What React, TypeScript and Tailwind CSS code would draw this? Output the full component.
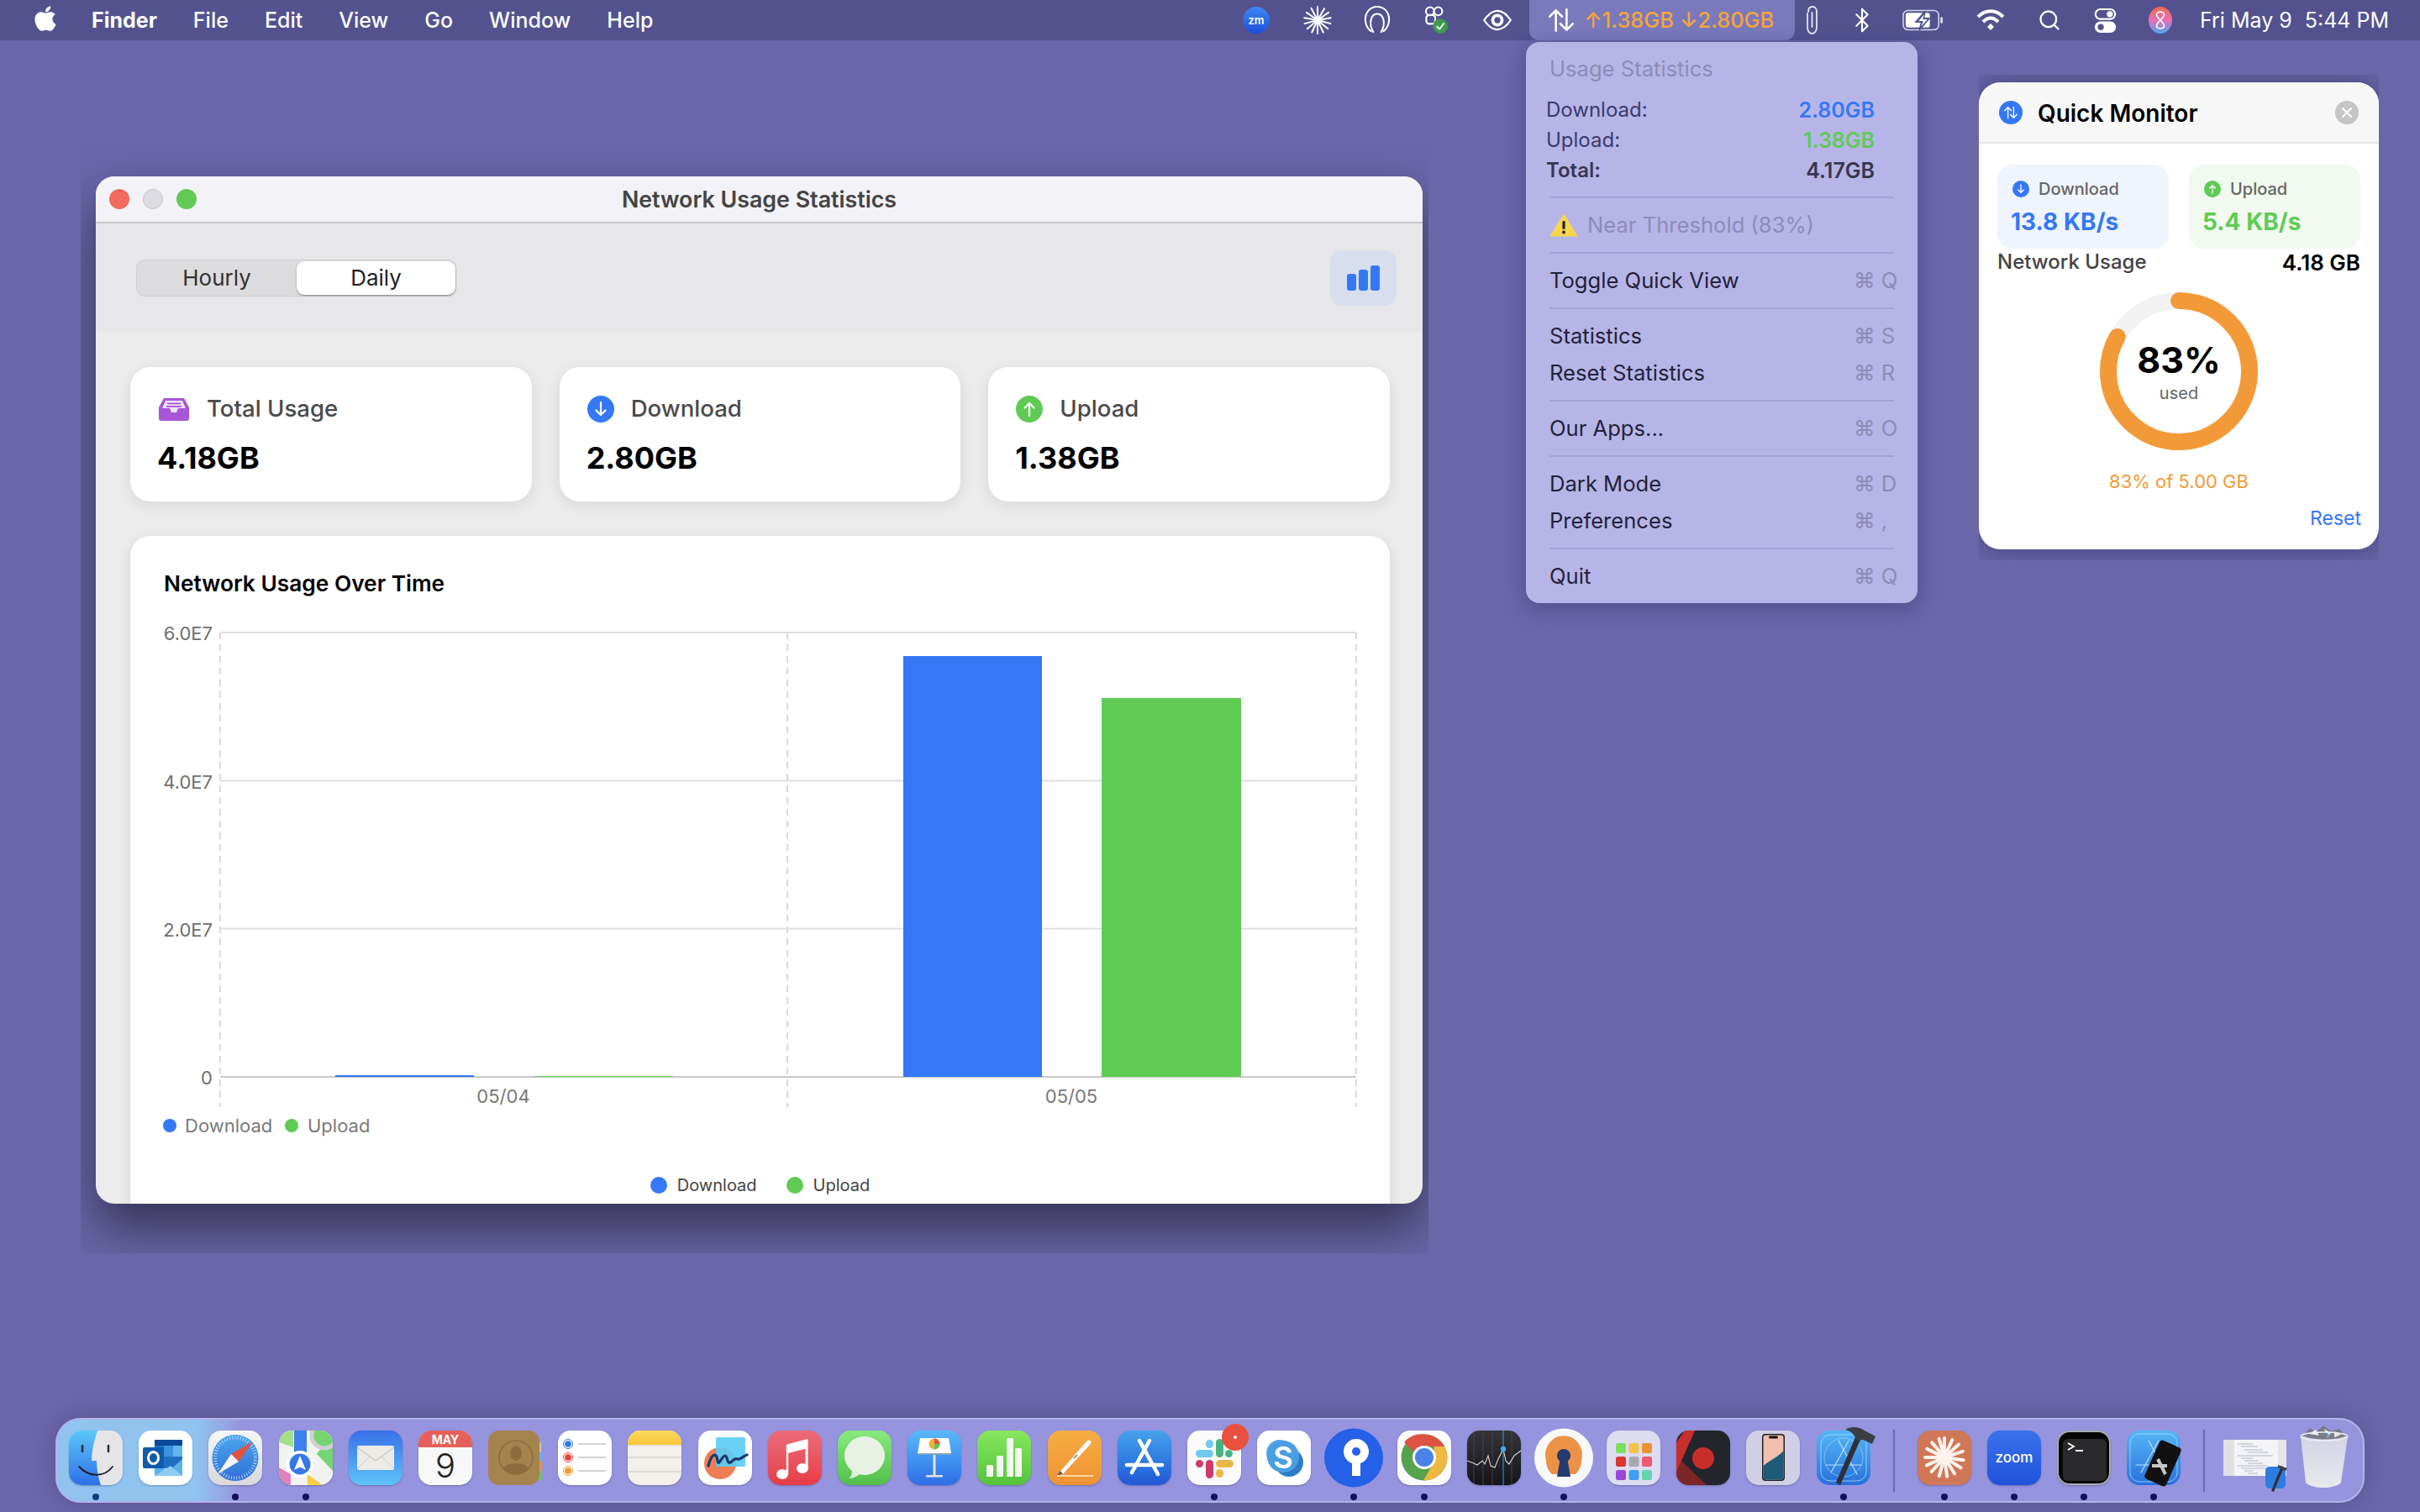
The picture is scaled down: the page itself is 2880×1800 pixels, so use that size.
import React from 'react';
import { FaApple } from 'react-icons/fa';
import { Bluetooth, Search } from 'lucide-react';

const Tile: React.FC<{ className: string; children?: React.ReactNode }> = ({ className, children }) => (
  <div className={`w-16 h-[65px] rounded-[15px] overflow-hidden shadow-[0_1px_2px_rgba(40,40,90,0.35)] ${className}`}>
    <svg viewBox="0 0 64 65" className="w-16 h-[65px] block">{children}</svg>
  </div>
);

const Free: React.FC<{ children?: React.ReactNode }> = ({ children }) => (
  <svg viewBox="0 0 64 65" className="w-16 h-[65px] block overflow-visible">{children}</svg>
);

const AppStoreA = ({ stroke = '#fff', w = 4.5 }: { stroke?: string; w?: number }) => (
  <g stroke={stroke} strokeWidth={w} strokeLinecap="round" fill="none">
    <path d="M38 12 L17 50" />
    <path d="M26 12 L48 52" />
    <path d="M11 41 H53" />
  </g>
);

const dockItems: { name: string; dot?: string; icon: React.ReactNode }[] = [
  {
    name: 'Finder', dot: '#0e3d7c',
    icon: (
      <Tile className="bg-[#e5e5e8]">
        <defs><linearGradient id="fnd" x1="0" y1="0" x2="0" y2="1"><stop offset="0" stopColor="#5ac8fa" /><stop offset="1" stopColor="#2f6fe6" /></linearGradient></defs>
        <path d="M0 0H34C30 12 27 24 27 36H33C33 46 35 56 38 65H0Z" fill="url(#fnd)" />
        <path d="M16 18V25M47 18V25" stroke="#2b2b33" strokeWidth="2.5" strokeLinecap="round" />
        <path d="M12 43C24 56 42 56 52 43" stroke="#1f2030" strokeWidth="2" fill="none" strokeLinecap="round" />
      </Tile>
    ),
  },
  {
    name: 'Outlook',
    icon: (
      <Tile className="bg-white">
        <rect x="19" y="11" width="33" height="34" fill="#1e6fc4" />
        <rect x="19" y="11" width="33" height="7" fill="#0d4a97" />
        <rect x="30" y="18" width="11" height="13" fill="#3a94df" />
        <rect x="41" y="18" width="11" height="13" fill="#64b5ee" />
        <path d="M19 40L36 48L52 34V54H19Z" fill="#5bb3ec" />
        <path d="M19 54L38 42L52 54Z" fill="#8ccdf4" />
        <rect x="5" y="20" width="25" height="25" rx="2" fill="#0f5aab" />
        <ellipse cx="17.5" cy="32.5" rx="6" ry="7" fill="none" stroke="#fff" strokeWidth="3" />
      </Tile>
    ),
  },
  {
    name: 'Safari', dot: '#14115e',
    icon: (
      <Tile className="bg-linear-to-b from-[#f7f7f7] to-[#d9d9dc]">
        <defs><linearGradient id="saf" x1="0" y1="0" x2="0" y2="1"><stop offset="0" stopColor="#4aa6ec" /><stop offset="1" stopColor="#2f6fd8" /></linearGradient></defs>
        <circle cx="32" cy="32.5" r="27.5" fill="url(#saf)" />
        <circle cx="32" cy="32.5" r="24" fill="none" stroke="#d8ecfb" strokeWidth="4" strokeDasharray="0.8 2.4" />
        <path d="M53 13L27 28L36 37Z" fill="#e8503f" />
        <path d="M11 52L27 28L36 37Z" fill="#f4f4f4" />
      </Tile>
    ),
  },
  {
    name: 'Maps', dot: '#14115e',
    icon: (
      <Tile className="bg-[#f2f2f0]">
        <path d="M0 0H17V20L0 14Z" fill="#a4e08a" />
        <path d="M42 0H64V60L30 22V0Z" fill="#f2f2f0" />
        <path d="M45 28L64 48V10C58 14 50 20 45 28Z" fill="#74d572" />
        <circle cx="54" cy="6" r="15" fill="#74d572" stroke="#d0d0d0" strokeWidth="5" />
        <path d="M0 44L14 52V65H0Z" fill="#dd82bf" />
        <path d="M34 52L52 65H34Z" fill="#f5cf45" />
        <rect x="18" y="0" width="15" height="30" fill="#3d80ea" />
        <circle cx="25" cy="40" r="16" fill="#fff" />
        <circle cx="25" cy="40" r="12.5" fill="#3577e6" />
        <path d="M25 30L32 47L25 43.5L18 47Z" fill="#fff" />
      </Tile>
    ),
  },
  {
    name: 'Mail',
    icon: (
      <Tile className="bg-linear-to-b from-[#3a70e8] to-[#5ec3f8]">
        <rect x="10" y="18" width="44" height="29" rx="2" fill="#ecebe8" />
        <path d="M10 20L32 36L54 20" fill="none" stroke="#bdbcbc" strokeWidth="1" />
        <path d="M10 46L25 31M54 46L39 31" stroke="#cfcecc" strokeWidth="1" />
      </Tile>
    ),
  },
  {
    name: 'Calendar',
    icon: (
      <Tile className="bg-[#f8f8f8]">
        <rect x="0" y="0" width="64" height="20" fill="#e5605a" />
        <text x="32" y="16" textAnchor="middle" fontSize="14" fontWeight="700" fill="#fff" fontFamily="Inter, sans-serif">MAY</text>
        <text x="32" y="56" textAnchor="middle" fontSize="40" fontWeight="300" fill="#222" fontFamily="Inter, sans-serif">9</text>
      </Tile>
    ),
  },
  {
    name: 'Contacts',
    icon: (
      <Free>
        <rect x="50" y="14" width="13" height="12" fill="#c9c3ac" />
        <rect x="50" y="26" width="13" height="12" fill="#5bb5ee" />
        <rect x="50" y="36" width="13" height="12" fill="#ee9330" />
        <rect x="50" y="48" width="13" height="11" fill="#66c760" />
        <rect x="0" y="0" width="61" height="65" rx="13" fill="#a5834f" />
        <circle cx="33" cy="32" r="20" fill="none" stroke="#8d6d3d" strokeWidth="1.6" />
        <ellipse cx="33" cy="27" rx="7" ry="9" fill="#8d6d3d" />
        <path d="M18 45C22 37 44 37 48 45C44 50 38 52 33 52C28 52 22 50 18 45Z" fill="#8d6d3d" />
      </Free>
    ),
  },
  {
    name: 'Reminders',
    icon: (
      <Tile className="bg-white">
        {[['#2f78f0', 16], ['#e8413a', 32], ['#ef9a2e', 48]].map(([c, y]) => (
          <g key={String(c)}>
            <circle cx="12" cy={Number(y)} r="5.5" fill="none" stroke={String(c)} strokeWidth="1" />
            <circle cx="12" cy={Number(y)} r="3.8" fill={String(c)} />
            <rect x="24" y={Number(y) - 0.8} width="33" height="1.6" fill="#c8c8cc" />
          </g>
        ))}
      </Tile>
    ),
  },
  {
    name: 'Notes',
    icon: (
      <Tile className="bg-[#f2f0e9]">
        <defs><linearGradient id="nts" x1="0" y1="0" x2="0" y2="1"><stop offset="0" stopColor="#fdd95e" /><stop offset="1" stopColor="#f9c63a" /></linearGradient></defs>
        <rect width="64" height="17" fill="url(#nts)" />
        <path d="M0 18H64" stroke="#c9c7be" strokeWidth="1.4" strokeDasharray="1 1.4" />
        <path d="M0 32H64M0 49H64" stroke="#d6d4cc" strokeWidth="1.4" />
      </Tile>
    ),
  },
  {
    name: 'Freeform',
    icon: (
      <Tile className="bg-white">
        <ellipse cx="26" cy="39" rx="19" ry="19" fill="#ee7d55" />
        <rect x="21" y="8" width="35" height="35" rx="2" fill="#5ccdf5" opacity="0.92" />
        <path d="M12 42C16 26 22 26 23 36C24 44 28 30 32 30C35 30 34 40 38 38C42 36 43 32 47 34C50 35 52 31 58 29" fill="none" stroke="#143a6a" strokeWidth="3.2" strokeLinecap="round" />
      </Tile>
    ),
  },
  {
    name: 'Music',
    icon: (
      <Tile className="bg-linear-to-b from-[#ec6b7c] to-[#e53c46]">
        <path d="M23 18L46 12V44" fill="none" stroke="#fff" strokeWidth="3" />
        <path d="M23 19V52M23 18L46 12V20L23 26Z" fill="#fff" stroke="#fff" strokeWidth="2.4" />
        <ellipse cx="17" cy="52" rx="7" ry="6" fill="#fff" />
        <ellipse cx="41" cy="45" rx="7" ry="6" fill="#fff" />
      </Tile>
    ),
  },
  {
    name: 'Messages',
    icon: (
      <Tile className="bg-linear-to-b from-[#88e97f] to-[#52bf4a]">
        <ellipse cx="32" cy="30" rx="24" ry="23" fill="#e8f2e4" />
        <path d="M17 47C17 52 16 55 13 57C19 57 24 54 27 51Z" fill="#e0eeda" />
      </Tile>
    ),
  },
  {
    name: 'Keynote',
    icon: (
      <Tile className="bg-linear-to-b from-[#5ab9fb] to-[#2f6de8]">
        <path d="M15 9H49L52 27H12Z" fill="#fbfbfb" />
        <rect x="12" y="27" width="40" height="1.5" fill="#9aa" />
        <circle cx="32" cy="16" r="6.5" fill="#efb23a" />
        <path d="M32 16V9.5A6.5 6.5 0 0 1 38.5 16Z" fill="#e0533d" />
        <path d="M32 16H38.5A6.5 6.5 0 0 1 32 22.5Z" fill="#62c356" />
        <rect x="30.5" y="29" width="3" height="24" fill="#e3e3e6" />
        <rect x="22" y="53" width="20" height="2.5" rx="1" fill="#e3e3e6" />
      </Tile>
    ),
  },
  {
    name: 'Numbers',
    icon: (
      <Tile className="bg-linear-to-b from-[#87e65e] to-[#53c43c]">
        {[[11, 41, 8, 14], [23, 30, 8, 25], [35, 9, 8, 46], [45, 21, 8, 34]].map(([x, y, w, h]) => (
          <rect key={x} x={x} y={y} width={w} height={h} rx="1.5" fill="#f3f7f0" />
        ))}
      </Tile>
    ),
  },
  {
    name: 'Pages',
    icon: (
      <Tile className="bg-linear-to-b from-[#f5ad43] to-[#ef9334]">
        <path d="M10 54L46 13C49 10 53 12 51 16L15 55Z" fill="#f8f8f6" />
        <path d="M10 54L15 48L18 52Z" fill="#6a5a48" />
        <path d="M31 33L35 29" stroke="#999" strokeWidth="2" />
        <rect x="11" y="53" width="43" height="2" fill="#fad7a4" />
      </Tile>
    ),
  },
  {
    name: 'App Store',
    icon: (
      <Tile className="bg-linear-to-b from-[#46a2ec] to-[#2457d6]">
        <AppStoreA />
      </Tile>
    ),
  },
  {
    name: 'Slack', dot: '#14115e',
    icon: (
      <Tile className="bg-[#fbfbfb]">
        <rect x="10" y="23" width="21" height="9" rx="4.5" fill="#6fc9ec" />
        <rect x="22" y="11" width="9" height="10" rx="4.5" fill="#6fc9ec" />
        <rect x="34" y="10" width="9" height="22" rx="4.5" fill="#47b582" />
        <rect x="45" y="23" width="9" height="9" rx="4.5" fill="#47b582" />
        <rect x="10" y="35" width="9" height="9" rx="4.5" fill="#d03a68" />
        <rect x="22" y="35" width="9" height="22" rx="4.5" fill="#d03a68" />
        <rect x="34" y="35" width="21" height="9" rx="4.5" fill="#e8b94a" />
        <rect x="34" y="46" width="9" height="10" rx="4.5" fill="#e8b94a" />
      </Tile>
    ),
  },
  {
    name: 'Skype',
    icon: (
      <Tile className="bg-white">
        <circle cx="38" cy="38" r="17" fill="#2d7cc9" />
        <circle cx="27" cy="27" r="16" fill="#56a8e6" />
        <rect x="12" y="12" width="38" height="38" rx="19" fill="#4a9fe0" />
        <text x="31" y="45" textAnchor="middle" fontSize="36" fontWeight="600" fill="#fff" fontFamily="Inter, sans-serif">S</text>
      </Tile>
    ),
  },
  {
    name: '1Password', dot: '#14115e',
    icon: (
      <Free>
        <circle cx="32" cy="32.5" r="35" fill="#2460e8" />
        <circle cx="35" cy="25" r="15" fill="#fff" />
        <circle cx="35" cy="25" r="5" fill="#2460e8" />
        <rect x="30" y="30" width="10" height="24" fill="#fff" />
      </Free>
    ),
  },
  {
    name: 'Chrome', dot: '#14115e',
    icon: (
      <Tile className="bg-[#fbfbfd]">
        <circle cx="32" cy="32" r="27.5" fill="#56a24f" />
        <path d="M32 4.5A27.5 27.5 0 0 1 56 19H32A13 13 0 0 0 20 26L8 14A27.5 27.5 0 0 1 32 4.5Z" fill="#dd5343" />
        <path d="M56 19A27.5 27.5 0 0 1 31 59.5L42 40L44 19Z" fill="#efb840" />
        <circle cx="32" cy="32" r="14" fill="#fff" />
        <circle cx="32" cy="32" r="11" fill="#4a82e6" />
      </Tile>
    ),
  },
  {
    name: 'Stocks',
    icon: (
      <Tile className="bg-linear-to-b from-[#34343a] to-[#15151a]">
        <path d="M8 0V65M19 0V65M30 0V65M53 0V65" stroke="#4a4a50" strokeWidth="0.8" />
        <path d="M43 0V65" stroke="#3a9ce8" strokeWidth="1" />
        <path d="M0 36L8 39L12 41L18 36L21 40L25 30L28 42L33 44L37 34L43 22L46 36L50 40L56 30L64 24" fill="none" stroke="#d8d8d8" strokeWidth="1.1" />
        <circle cx="43" cy="22" r="3.2" fill="#49a6ee" />
      </Tile>
    ),
  },
  {
    name: 'OpenVPN', dot: '#14115e',
    icon: (
      <Free>
        <circle cx="32" cy="32.5" r="35" fill="#f8f8f8" />
        <path d="M11 36A22 23 0 1 1 53 36C53 43 50 48 46 52H37V32H27V52H18C14 48 11 43 11 36Z" fill="#ec9246" />
        <circle cx="32" cy="30" r="8" fill="#243a6d" />
        <path d="M28 32H36L40 55H24Z" fill="#243a6d" />
      </Free>
    ),
  },
  {
    name: 'Launchpad',
    icon: (
      <Tile className="bg-[#dddcf1]">
        {['#7de05c', '#f6c244', '#ee8f32', '#d8372d', '#a7a9ae', '#ef5a6e', '#9a46d8', '#3f9df4', '#63d5b0'].map((c, i) => (
          <rect key={c} x={11 + (i % 3) * 15.5} y={15 + Math.floor(i / 3) * 16} width="12" height="12" rx="2.5" fill={c} />
        ))}
      </Tile>
    ),
  },
  {
    name: 'Recorder',
    icon: (
      <Tile className="bg-[#24242c]">
        <path d="M10 0H22L0 50V14Z" fill="#c72f2c" />
        <path d="M0 50L6 36L36 65H0Z" fill="#7e2528" />
        <circle cx="32" cy="33" r="13" fill="#c92d2a" />
      </Tile>
    ),
  },
  {
    name: 'iPhone Mirroring',
    icon: (
      <Tile className="bg-[#d0cfe6]">
        <rect x="19" y="4" width="27" height="56" rx="4" fill="#222" />
        <rect x="20.5" y="5.5" width="24" height="53" rx="3" fill="#f0bfae" />
        <path d="M20.5 58V42C30 34 38 32 44.5 24V55C44.5 57 43 58.5 41.5 58.5H23C21.5 58.5 20.5 58 20.5 58Z" fill="#1d5a78" />
        <rect x="27" y="6.5" width="11" height="3" rx="1.5" fill="#111" />
      </Tile>
    ),
  },
  {
    name: 'Xcode', dot: '#14115e',
    icon: (
      <Free>
        <defs><linearGradient id="xcd" x1="0" y1="0" x2="0" y2="1"><stop offset="0" stopColor="#56b6f6" /><stop offset="1" stopColor="#2770dc" /></linearGradient></defs>
        <rect x="0" y="0" width="64" height="65" rx="15" fill="url(#xcd)" />
        <rect x="5" y="5" width="54" height="55" rx="11" fill="none" stroke="#a9dcfa" strokeWidth="0.8" />
        <circle cx="32" cy="32" r="23" fill="none" stroke="#a9dcfa" strokeWidth="0.6" />
        <AppStoreA stroke="#b8e2fb" w={1.2} />
        <path d="M23 62L46 8L52 11L28 65Z" fill="#2f3037" />
        <path d="M34 -1C42 -6 50 -4 57 0L70 7L66 16L55 11L48 12L44 5C42 2 38 0 34 -1Z" fill="#3c3d44" />
      </Free>
    ),
  },
  {
    name: 'sep',
    icon: null,
  },
  {
    name: 'Claude', dot: '#14115e',
    icon: (
      <Tile className="bg-[#cf7757]">
        <g stroke="#fbf3ec" strokeLinecap="round" fill="none">
          {[0, 24, 48, 72, 98, 122, 148, 172, 196, 222, 246, 270, 296, 320, 344].map(a => (
            <path key={a} d="M32 32V9" strokeWidth="4" transform={`rotate(${a} 32 32)`} />
          ))}
        </g>
        <circle cx="32" cy="32" r="8" fill="#fbf3ec" />
      </Tile>
    ),
  },
  {
    name: 'Zoom', dot: '#14115e',
    icon: (
      <Tile className="bg-linear-to-b from-[#3a72ec] to-[#2052da]">
        <text x="32" y="38" textAnchor="middle" fontSize="17" fontWeight="500" fill="#fff" fontFamily="Inter, sans-serif">zoom</text>
      </Tile>
    ),
  },
  {
    name: 'Terminal', dot: '#14115e',
    icon: (
      <Tile className="bg-[#b9bcc0] border-2 border-[#a9adb0]">
        <rect x="0" y="0" width="64" height="65" fill="#060606" />
        <rect x="5" y="8" width="52" height="50" rx="6" fill="#2a2a2c" />
        <path d="M11 13L18 17L11 21" fill="none" stroke="#fff" strokeWidth="1.8" />
        <rect x="20" y="21" width="9" height="2" fill="#fff" />
      </Tile>
    ),
  },
  {
    name: 'Simulator', dot: '#14115e',
    icon: (
      <Free>
        <defs><linearGradient id="sim" x1="0" y1="0" x2="0" y2="1"><stop offset="0" stopColor="#56b6f6" /><stop offset="1" stopColor="#2770dc" /></linearGradient></defs>
        <rect x="0" y="0" width="64" height="65" rx="15" fill="url(#sim)" />
        <rect x="4" y="4" width="56" height="57" rx="11" fill="none" stroke="#a9dcfa" strokeWidth="0.8" />
        <AppStoreA stroke="#b8e2fb" w={1.2} />
        <rect x="29" y="14" width="28" height="50" rx="4" fill="#111" transform="rotate(24 43 39)" />
        <path d="M37 34L46 52M30 42H48" stroke="#c8c8c8" strokeWidth="4" />
      </Free>
    ),
  },
  {
    name: 'sep',
    icon: null,
  },
  {
    name: 'Xcode window',
    icon: (
      <Free>
        <rect x="-5" y="11" width="75" height="43" fill="#f4f4f6" />
        <rect x="-5" y="11" width="13" height="43" fill="#e0e0e3" />
        <rect x="60" y="11" width="10" height="43" fill="#e6e6e8" />
        <g stroke="#7f8ea8" strokeWidth="0.6">
          {[16, 19, 23, 26, 30, 33, 36, 39, 42, 45, 48, 51].map((y, i) => (
            <path key={y} d={`M${12 + (i % 4) * 4} ${y}H${30 + (i % 5) * 6}`} />
          ))}
        </g>
        <rect x="45" y="43" width="24" height="26" rx="5" fill="#2f7be0" />
        <path d="M52 72L64 42L67 44L55 73Z" fill="#30313a" />
        <path d="M60 41L71 45L69 48L60 44Z" fill="#3c3d44" />
      </Free>
    ),
  },
  {
    name: 'Trash',
    icon: (
      <Free>
        <defs><linearGradient id="trs" x1="0" y1="0" x2="0" y2="1"><stop offset="0" stopColor="#d4d4e4" /><stop offset="1" stopColor="#e8e8ee" /></linearGradient></defs>
        <path d="M4 7L10 62C18 70 44 70 52 62L60 7Z" fill="url(#trs)" />
        <path d="M7 6L15 -3L22 2L31 -6L40 1L50 -2L58 6C50 12 16 12 7 6Z" fill="#7b7b88" />
        <path d="M14 4L22 -1L26 6ZM32 -2L40 3L36 8ZM44 1L52 5L44 8Z" fill="#e8e8f0" />
        <path d="M34 2L38 5L35 7Z" fill="#3f8fd0" />
        <ellipse cx="32" cy="7" rx="28" ry="5" fill="none" stroke="#efeff5" strokeWidth="1.4" />
      </Free>
    ),
  },
];

const Dock = () => (
  <div className="mx-[66px] mb-[11px] h-[101px] rounded-[30px] border-2 border-[#b4b2ec] bg-linear-to-r from-[#90c4ef] from-[6%] to-[#9694de] to-[8%] shadow-[0_0_24px_rgba(30,30,80,0.25)] flex pl-[4.4px]">
    {dockItems.map((item, i) =>
      item.name === 'sep' ? (
        <div key={i} className="w-[36.8px] flex justify-center pt-[12px]">
          <div className="w-[2px] h-[74px] bg-[#6a68b4]" />
        </div>
      ) : (
        <div key={i} className="relative w-[83.2px] flex flex-col items-center pt-[13px]">
          {item.icon}
          {item.dot && <div className="mt-[10px] w-[8px] h-[8px] rounded-full" style={{ backgroundColor: item.dot }} />}
          {item.name === 'Slack' && (
            <div className="absolute left-[51px] top-[5px] w-[32px] h-[32px] rounded-full bg-[#e9503f] flex items-center justify-center">
              <div className="w-[4px] h-[4px] rounded-full bg-white" />
            </div>
          )}
        </div>
      )
    )}
  </div>
);

const ArrowsUpDown = ({ className = '', color = '#fff' }: { className?: string; color?: string }) => (
  <svg viewBox="0 0 32 28" className={className} fill="none" stroke={color} strokeWidth="2.4" strokeLinecap="round" strokeLinejoin="round">
    <path d="M10 26V3M3 10L10 3L17 10" />
    <path d="M22 2V25M15 18L22 25L29 18" />
  </svg>
);

const MenuBar = () => (
  <div className="relative z-20 h-12 shrink-0 bg-[#53528f] flex items-center text-white text-[25px] leading-8">
    <FaApple className="ml-[37px] w-[34px] h-[34px] -mt-[5px]" />
    <div className="ml-[38px] flex gap-[43px] -mt-px">
      <span className="font-bold">Finder</span>
      {['File', 'Edit', 'View', 'Go', 'Window', 'Help'].map(m => (
        <span key={m} className="font-medium">{m}</span>
      ))}
    </div>
    <div className="absolute left-[1460px] top-0 h-12 flex items-center text-[25px]">
      <div className="w-[70px] flex justify-center">
        <div className="w-[32px] h-[32px] rounded-full bg-linear-to-b from-[#3f86f5] to-[#1b4fd8] flex items-center justify-center text-[13px] font-semibold">zm</div>
      </div>
      <div className="w-[76px] flex justify-center">
        <svg viewBox="0 0 36 36" className="w-[36px] h-[36px]" stroke="#fff" strokeLinecap="round">
          {[0, 30, 55, 80, 105, 130, 155, 180, 205, 230, 255, 280, 305, 332].map(a => (
            <path key={a} d="M18 18V2" strokeWidth="2" transform={`rotate(${a} 18 18)`} />
          ))}
        </svg>
      </div>
      <div className="w-[66px] flex justify-center">
        <svg viewBox="0 0 34 38" className="w-[32px] h-[36px]" fill="none" stroke="#fff" strokeWidth="2.2" strokeLinecap="round">
          <path d="M9 33C4 29 2 24 2 18C2 9 8 2 17 2C26 2 32 9 32 18C32 24 30 29 25 33" />
          <path d="M12 34C9 29 8 24 9 19C10 14 13 11 17 11C21 11 24 14 25 19C26 24 25 29 22 34" />
        </svg>
      </div>
      <div className="w-[72px] flex justify-center">
        <svg viewBox="0 0 34 40" className="w-[30px] h-[36px]">
          <circle cx="10" cy="8" r="5.5" fill="none" stroke="#fff" strokeWidth="2.4" />
          <circle cx="21" cy="8" r="5.5" fill="none" stroke="#fff" strokeWidth="2.4" />
          <rect x="5" y="13" width="12" height="12" rx="4" fill="none" stroke="#fff" strokeWidth="2.4" />
          <circle cx="24" cy="28" r="10" fill="#3f9a4e" />
          <path d="M19 28L23 32L29 24" fill="none" stroke="#fff" strokeWidth="2" />
        </svg>
      </div>
      <div className="w-[76px] flex justify-center">
        <svg viewBox="0 0 38 28" className="w-[36px] h-[26px]" fill="none" stroke="#fff">
          <path d="M2 14C8 5 14 2 19 2C24 2 30 5 36 14C30 23 24 26 19 26C14 26 8 23 2 14Z" strokeWidth="2.4" />
          <circle cx="19" cy="14" r="6" strokeWidth="4" />
        </svg>
      </div>
      <div className="w-[316px] h-12 rounded-b-[12px] bg-[#7a79bb] flex items-center">
        <ArrowsUpDown className="ml-[21px] w-[34px] h-[30px]" />
        <span className="ml-[10px] text-[25.4px] text-[#f4a53c] font-medium whitespace-nowrap">↑1.38GB ↓2.80GB</span>
      </div>
      <div className="w-[40px] flex justify-center">
        <svg viewBox="0 0 20 36" className="w-[20px] h-[36px]" fill="none" stroke="#e6e6f4" strokeWidth="1.8" strokeLinecap="round">
          <path d="M5 10V26C5 31 7.5 34 10.5 34C13.5 34 16 31 16 26V8C16 4 14 2 11 2C8 2 6 4 6 8" />
          <path d="M10.5 9V26" />
        </svg>
      </div>
      <div className="w-[80px] flex justify-center">
        <Bluetooth className="w-[32px] h-[36px]" strokeWidth={1.6} />
      </div>
      <div className="w-[66px] flex justify-center">
        <svg viewBox="0 0 52 26" className="w-[50px] h-[26px]">
          <rect x="1" y="1" width="44" height="24" rx="6" fill="none" stroke="#d6d5ee" strokeWidth="1.6" />
          <rect x="4" y="4" width="30" height="18" rx="3" fill="#fff" />
          <path d="M28 2L17 15H24L21 25L33 11H26Z" fill="#53528f" stroke="#53528f" strokeWidth="2" />
          <path d="M27 6L20 14H26L23 21L31 12H25Z" fill="#fff" />
          <rect x="47" y="9" width="3" height="8" rx="1.5" fill="#d6d5ee" />
        </svg>
      </div>
      <div className="w-[94px] flex justify-center">
        <svg viewBox="0 0 36 28" className="w-[36px] h-[28px]" fill="none" stroke="#fff" strokeWidth="4">
          <path d="M3 10C12 1 24 1 33 10" />
          <path d="M9 16C15 10 21 10 27 16" />
          <path d="M14 22L18 26L22 22L18 18Z" fill="#fff" stroke="none" />
        </svg>
      </div>
      <div className="w-[46px] flex justify-center">
        <Search className="w-[28px] h-[28px]" strokeWidth={2} />
      </div>
      <div className="w-[86px] flex justify-center">
        <svg viewBox="0 0 30 34" className="w-[27px] h-[31px]" fill="none">
          <rect x="2" y="2" width="26" height="13" rx="6.5" stroke="#fff" strokeWidth="2.4" />
          <circle cx="21" cy="8.5" r="4" fill="#fff" />
          <rect x="1" y="18" width="28" height="15" rx="7.5" fill="#fff" />
          <circle cx="9" cy="25.5" r="4" fill="#53528f" />
        </svg>
      </div>
      <div className="w-[46px] flex justify-center">
        <svg viewBox="0 0 28 32" className="w-[28px] h-[32px]">
          <defs><linearGradient id="siri" x1="0" y1="0" x2="0" y2="1"><stop offset="0" stopColor="#f2694f" /><stop offset="0.5" stopColor="#ea6fb4" /><stop offset="1" stopColor="#45a8f2" /></linearGradient></defs>
          <ellipse cx="14" cy="16" rx="14" ry="16" fill="url(#siri)" />
          <path d="M14 16C8 10 8 7 14 6C20 7 20 10 14 16C8 22 8 25 14 26C20 25 20 22 14 16Z" fill="none" stroke="#fff" strokeWidth="1.6" />
        </svg>
      </div>
      <span className="ml-[24px] font-normal whitespace-nowrap">Fri May 9</span>
      <span className="ml-[15px] font-normal whitespace-nowrap">5:44 PM</span>
    </div>
  </div>
);

const popupSections = [
  [{ label: 'Toggle Quick View', key: 'Q' }],
  [{ label: 'Statistics', key: 'S' }, { label: 'Reset Statistics', key: 'R' }],
  [{ label: 'Our Apps...', key: 'O' }],
  [{ label: 'Dark Mode', key: 'D' }, { label: 'Preferences', key: ',' }],
  [{ label: 'Quit', key: 'Q' }],
];

const Sep = () => <div className="mx-[28px] h-[2px] bg-[#a3a1d5]" />;

const UsagePopup = () => (
  <div className="absolute z-30 left-[1816px] top-[2px] w-[466px] h-[668px] rounded-[16px] bg-[#b7b5e8] shadow-[0_6px_24px_rgba(30,30,80,0.35)] text-[25.6px] pt-[14px]">
    <div className="h-9 pl-[28px] leading-9 text-[#8d8bb8]">Usage Statistics</div>
    <div className="mt-[13px] pl-[24px] pr-[51px] text-[24px]">
      <div className="flex justify-between h-9 leading-9 text-[#3b3a6e]"><span>Download:</span><span className="text-[25px] font-semibold text-[#3478f6]">2.80GB</span></div>
      <div className="flex justify-between h-9 leading-9 text-[#3b3a6e]"><span>Upload:</span><span className="text-[25px] font-semibold text-[#5fcb55]">1.38GB</span></div>
      <div className="flex justify-between h-9 leading-9 font-semibold text-[#37364f]"><span>Total:</span><span className="text-[25px]">4.17GB</span></div>
    </div>
    <div className="mt-[13px]"><Sep /></div>
    <div className="h-16 flex items-center pl-[28px] text-[#8d8bb8]">
      <svg viewBox="0 0 34 28" className="w-[34px] h-[28px]">
        <path d="M17 1L33 27H1Z" fill="#f8d64e" stroke="#f8d64e" strokeWidth="1" strokeLinejoin="round" />
        <rect x="15.4" y="9" width="3.2" height="10" rx="1.4" fill="#222" />
        <circle cx="17" cy="22.5" r="1.9" fill="#222" />
      </svg>
      <span className="ml-[11px]">Near Threshold (83%)</span>
    </div>
    {popupSections.map((sec, i) => (
      <div key={i}>
        <Sep />
        <div className={sec.length > 1 ? 'py-[10px]' : ''}>
          {sec.map(row => (
            <div key={row.label} className={`flex items-center pl-[28px] text-[#22223a] ${sec.length > 1 ? 'h-11' : 'h-16'}`}>
              <span>{row.label}</span>
              <span className="ml-auto w-[76px] text-[#8d8bb8] whitespace-pre">⌘ {row.key}</span>
            </div>
          ))}
        </div>
      </div>
    ))}
  </div>
);

const CircleArrow = ({ up, size, color }: { up?: boolean; size: string; color: string }) => (
  <svg viewBox="0 0 32 32" className={size}>
    <circle cx="16" cy="16" r="16" fill={color} />
    <path d={up ? 'M16 24V9M10.5 14.5L16 9L21.5 14.5' : 'M16 8V23M10.5 17.5L16 23L21.5 17.5'} fill="none" stroke="#fff" strokeWidth="2.2" strokeLinecap="round" strokeLinejoin="round" />
  </svg>
);

const QuickMonitor = () => (
  <div className="absolute z-10 left-[2355px] top-[41px] w-[476px] h-[578px] overflow-hidden">
    <div className="mt-[9px] h-[556px] rounded-[26px] bg-white shadow-[0_0_36px_rgba(20,20,60,0.45)] overflow-hidden">
      <div className="h-[73px] bg-[#f7f7f7] border-b-2 border-[#e6e6e6] flex items-center pl-[24px] pr-[24px]">
        <div className="w-[28px] h-[28px] rounded-full bg-[#3478f6] flex items-center justify-center">
          <ArrowsUpDown className="w-[18px] h-[16px]" />
        </div>
        <span className="ml-[18px] mt-[2px] text-[28px] font-semibold text-black">Quick Monitor</span>
        <div className="ml-auto w-[28px] h-[28px] rounded-full bg-[#c5c5c7] flex items-center justify-center">
          <svg viewBox="0 0 14 14" className="w-[14px] h-[14px]" stroke="#fff" strokeWidth="2.2" strokeLinecap="round"><path d="M2 2L12 12M12 2L2 12" /></svg>
        </div>
      </div>
      <div className="px-[22px] pt-[25px]">
        <div className="flex gap-[24px]">
          <div className="w-[204px] h-[100px] rounded-[18px] bg-[#eff4fe] pl-[16px] pt-[18px]">
            <div className="flex items-center pl-[2px] gap-[11px] text-[20px] text-[#666] font-medium h-[22px]">
              <CircleArrow size="w-[20px] h-[20px]" color="#3478f6" />Download
            </div>
            <div className="mt-[10px] text-[28px] leading-9 font-bold text-[#3478f6]">13.8 KB/s</div>
          </div>
          <div className="w-[204px] h-[100px] rounded-[18px] bg-[#f1f9f0] pl-[16px] pt-[18px]">
            <div className="flex items-center pl-[2px] gap-[11px] text-[20px] text-[#666] font-medium h-[22px]">
              <CircleArrow up size="w-[20px] h-[20px]" color="#5fcb55" />Upload
            </div>
            <div className="mt-[10px] text-[28px] leading-9 font-bold text-[#5fcb55]">5.4 KB/s</div>
          </div>
        </div>
        <div className="flex justify-between items-center h-[32px] text-[24px]">
          <span className="font-medium text-[#444]">Network Usage</span>
          <span className="text-[26px] font-semibold text-black">4.18 GB</span>
        </div>
        <div className="relative mt-[20px] mx-auto w-[188px] h-[188px]">
          <svg viewBox="0 0 188 188" className="w-[188px] h-[188px] -rotate-90">
            <circle cx="94" cy="94" r="84" fill="none" stroke="#f2f2f2" strokeWidth="20" />
            <circle cx="94" cy="94" r="84" fill="none" stroke="#f39a38" strokeWidth="20" strokeLinecap="round" strokeDasharray="438 528" />
          </svg>
          <div className="absolute inset-0 flex flex-col items-center pt-[52px]">
            <span className="text-[43px] leading-[56px] font-bold text-black">83%</span>
            <span className="text-[20px] leading-6 text-[#666]">used</span>
          </div>
        </div>
        <div className="mt-[23px] text-center text-[22px] leading-7 text-[#f39a38]">83% of 5.00 GB</div>
        <div className="mt-[16px] text-right text-[23px] leading-7 text-[#3478f6] -mr-[1px]">Reset</div>
      </div>
    </div>
  </div>
);

const stats = [
  { label: 'Total Usage', value: '4.18GB', kind: 'total' },
  { label: 'Download', value: '2.80GB', kind: 'down' },
  { label: 'Upload', value: '1.38GB', kind: 'up' },
];

const StatCard = ({ label, value, kind }: { label: string; value: string; kind: string }) => (
  <div className="h-40 rounded-[24px] bg-white shadow-[0_4px_18px_rgba(0,0,0,0.09)] pl-[32px] pt-[33px]">
    <div className="flex items-center h-[34px] text-[27.6px] font-medium text-[#4a4a4c]">
      {kind === 'total' && (
        <svg viewBox="0 0 38 28" className="ml-[1px] w-[38px] h-[28px]">
          <path d="M7 1H31L37 12V25C37 27 36 28 34 28H4C2 28 1 27 1 25V12Z" fill="#a855d8" />
          <path d="M9 4H29L33 13H24L22 18H16L14 13H5Z" fill="#f1e2fa" />
          <rect x="11" y="6.5" width="16" height="1.8" fill="#a855d8" />
          <rect x="10" y="10" width="18" height="1.8" fill="#a855d8" />
        </svg>
      )}
      {kind === 'down' && <CircleArrow size="ml-[1px] w-[32px] h-[32px]" color="#3478f6" />}
      {kind === 'up' && <CircleArrow up size="ml-[1px] w-[32px] h-[32px]" color="#5fcb55" />}
      <span className="ml-[20px]">{label}</span>
    </div>
    <div className="mt-[19px] text-[36px] leading-[44px] font-bold text-black">{value}</div>
  </div>
);

const yTicks = [
  { label: '6.0E7', y: 753 },
  { label: '4.0E7', y: 929.5 },
  { label: '2.0E7', y: 1105.5 },
  { label: '0', y: 1282 },
];

const bars = [
  { x: 399, w: 165, top: 1280, fill: '#3478f6' },
  { x: 636, w: 165, top: 1281, fill: '#5fcb55' },
  { x: 1075, w: 165, top: 781, fill: '#3478f6' },
  { x: 1311, w: 166, top: 831, fill: '#5fcb55' },
];

const UsageChart = () => (
  <svg viewBox="155 720 1499 660" className="block w-[1499px] h-[660px]" fontFamily="Inter, sans-serif">
    {[262, 937, 1614].map(x => (
      <path key={x} d={`M${x} 753V1318`} stroke="#d9d9d9" strokeWidth="2" strokeDasharray="8 6" />
    ))}
    {yTicks.map(t => (
      <g key={t.label}>
        <path d={`M262 ${t.y}H1614`} stroke={t.label === '0' ? '#c8c8c8' : '#dedede'} strokeWidth="2" />
        <text x="253" y={t.y + 9} textAnchor="end" fontSize="22" fill="#6e6e6e">{t.label}</text>
      </g>
    ))}
    {bars.map(b => (
      <rect key={b.x} x={b.x} y={b.top} width={b.w} height={1282 - b.top} fill={b.fill} />
    ))}
    <text x="599" y="1313" textAnchor="middle" fontSize="22" fill="#777">05/04</text>
    <text x="1275" y="1313" textAnchor="middle" fontSize="22" fill="#777">05/05</text>
    <circle cx="202" cy="1340" r="8" fill="#3478f6" />
    <text x="220" y="1348" fontSize="22" fill="#7a7a7a">Download</text>
    <circle cx="347" cy="1340" r="8" fill="#5fcb55" />
    <text x="366" y="1348" fontSize="22" fill="#7a7a7a">Upload</text>
  </svg>
);

const StatsWindow = () => (
  <div className="absolute left-[96px] top-[122px] w-[1604px] h-[1322px] overflow-hidden">
    <div className="mt-[40px] ml-[18px] w-[1579px] h-[1223px] rounded-[22px] overflow-hidden bg-[#ececec] shadow-[0_30px_60px_rgba(0,0,0,0.5)]">
      <div className="relative h-14 bg-[#f2f2f7] border-b-2 border-[#c9c9cb] flex items-center justify-center">
        <div className="absolute left-[16px] flex gap-[16px]">
          <div className="w-[24px] h-[24px] rounded-full bg-[#f26b5e]" />
          <div className="w-[24px] h-[24px] rounded-full bg-[#dcdce1] border border-[#c4c4c8]" />
          <div className="w-[24px] h-[24px] rounded-full bg-[#62c956]" />
        </div>
        <span className="text-[26.8px] font-semibold text-[#444]">Network Usage Statistics</span>
      </div>
      <div className="h-[130px] bg-[#e7e7e9] flex items-center pl-[48px] pr-[31px]">
        <div className="w-[381px] h-[44px] rounded-[10px] bg-[#dcdcde] border border-[#d0d0d2] flex items-center">
          <div className="w-[190px] text-center text-[26px] text-[#333] pb-[2px]">Hourly</div>
          <div className="w-[189px] h-[40px] rounded-[9px] bg-white shadow-[0_1px_2px_rgba(0,0,0,0.4)] flex items-center justify-center text-[26px] text-[#222] pb-[2px]">Daily</div>
        </div>
        <div className="ml-auto w-[79px] h-[66px] rounded-[14px] bg-[#d8deed] flex items-end justify-center gap-[3px] pb-[18px]">
          <div className="w-[11px] h-[20px] rounded-[3px] bg-[#3478f6]" />
          <div className="w-[11px] h-[25px] rounded-[3px] bg-[#3478f6]" />
          <div className="w-[11px] h-[30px] rounded-[3px] bg-[#3478f6]" />
        </div>
      </div>
      <div className="pl-[41px] pr-[39px] pt-[41px]">
        <div className="grid grid-cols-3 gap-[33px]">
          {stats.map(s => <StatCard key={s.label} {...s} />)}
        </div>
        <div className="mt-[41px] h-[800px] rounded-t-[24px] bg-white shadow-[0_4px_18px_rgba(0,0,0,0.09)]">
          <div className="h-[82px] pl-[40px] pt-[41px] text-[26.3px] leading-8 font-semibold text-black">Network Usage Over Time</div>
          <UsageChart />
          <div className="flex justify-center items-center h-[22px] mt-[20px] text-[20px] text-[#444]">
            <div className="w-[20px] h-[20px] rounded-full bg-[#3478f6]" />
            <span className="ml-[12px]">Download</span>
            <div className="ml-[35px] w-[20px] h-[20px] rounded-full bg-[#5fcb55]" />
            <span className="ml-[12px]">Upload</span>
          </div>
        </div>
      </div>
    </div>
  </div>
);

export default function App() {
  return (
    <div className="w-[2880px] h-[1800px] overflow-hidden bg-[#6a66a8] flex flex-col font-['Inter','DejaVu_Sans',sans-serif]">
      <MenuBar />
      <div className="relative flex-1">
        <StatsWindow />
        <QuickMonitor />
        <UsagePopup />
      </div>
      <Dock />
    </div>
  );
}
